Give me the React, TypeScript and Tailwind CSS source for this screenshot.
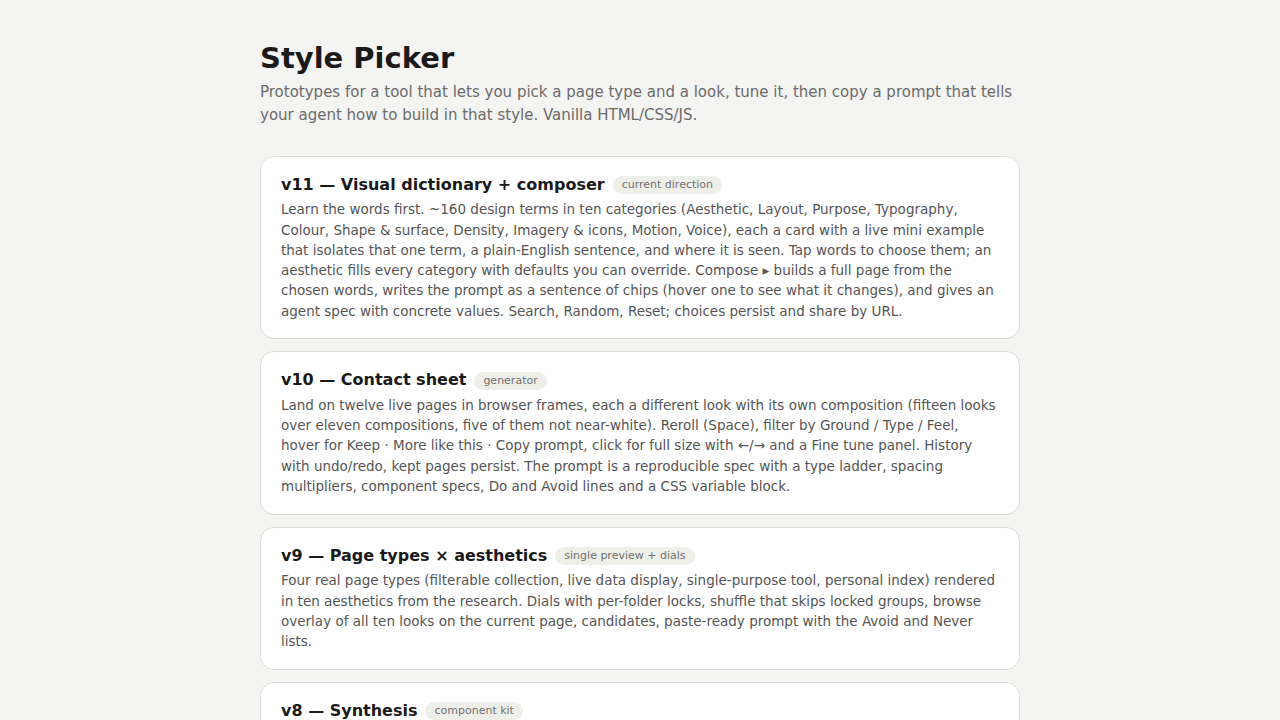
const versions = [
  {
    title: "v11 — Visual dictionary + composer",
    tag: "current direction",
    body: "Learn the words first. ~160 design terms in ten categories (Aesthetic, Layout, Purpose, Typography, Colour, Shape & surface, Density, Imagery & icons, Motion, Voice), each a card with a live mini example that isolates that one term, a plain-English sentence, and where it is seen. Tap words to choose them; an aesthetic fills every category with defaults you can override. Compose ▸ builds a full page from the chosen words, writes the prompt as a sentence of chips (hover one to see what it changes), and gives an agent spec with concrete values. Search, Random, Reset; choices persist and share by URL.",
  },
  {
    title: "v10 — Contact sheet",
    tag: "generator",
    body: "Land on twelve live pages in browser frames, each a different look with its own composition (fifteen looks over eleven compositions, five of them not near-white). Reroll (Space), filter by Ground / Type / Feel, hover for Keep · More like this · Copy prompt, click for full size with ←/→ and a Fine tune panel. History with undo/redo, kept pages persist. The prompt is a reproducible spec with a type ladder, spacing multipliers, component specs, Do and Avoid lines and a CSS variable block.",
  },
  {
    title: "v9 — Page types × aesthetics",
    tag: "single preview + dials",
    body: "Four real page types (filterable collection, live data display, single-purpose tool, personal index) rendered in ten aesthetics from the research. Dials with per-folder locks, shuffle that skips locked groups, browse overlay of all ten looks on the current page, candidates, paste-ready prompt with the Avoid and Never lists.",
  },
  {
    title: "v8 — Synthesis",
    tag: "component kit",
    body: "Every component rendered in each look, with tokens pulled out into a single palette and a spec you can paste into an agent. Theme switcher, density toggle, copy buttons on each block.",
  },
];

export default function App() {
  return (
    <div className="min-h-screen bg-[#f4f4f2] font-['DejaVu_Sans',sans-serif] text-[#1a1a1a]">
      <div className="mx-auto w-[760px] pt-[41px] pb-16">
        <h1 className="text-[29px] font-bold leading-[1.2]">Style Picker</h1>
        <p className="mt-[5px] text-[15px] leading-[23px] text-[#6b6b6b]">
          Prototypes for a tool that lets you pick a page type and a look, tune it, then copy a prompt that tells your
          agent how to build in that style. Vanilla HTML/CSS/JS.
        </p>
        <div className="mt-[29px] flex flex-col gap-3">
          {versions.map((v) => (
            <div key={v.title} className="rounded-[14px] border border-[#dcdcd6] bg-white px-5 pt-[17px] pb-[17.5px]">
              <div className="flex items-center gap-2">
                <span className="text-[16px] font-bold leading-[22.4px] text-[#1a1a1a]">{v.title}</span>
                <span className="rounded-full bg-[#efefea] px-[9px] py-[2px] text-[11px] leading-[14px] text-[#707070]">
                  {v.tag}
                </span>
              </div>
              <p className="mt-[3px] text-[13.5px] leading-[20.3px] text-[#555555]">{v.body}</p>
            </div>
          ))}
        </div>
      </div>
    </div>
  );
}
